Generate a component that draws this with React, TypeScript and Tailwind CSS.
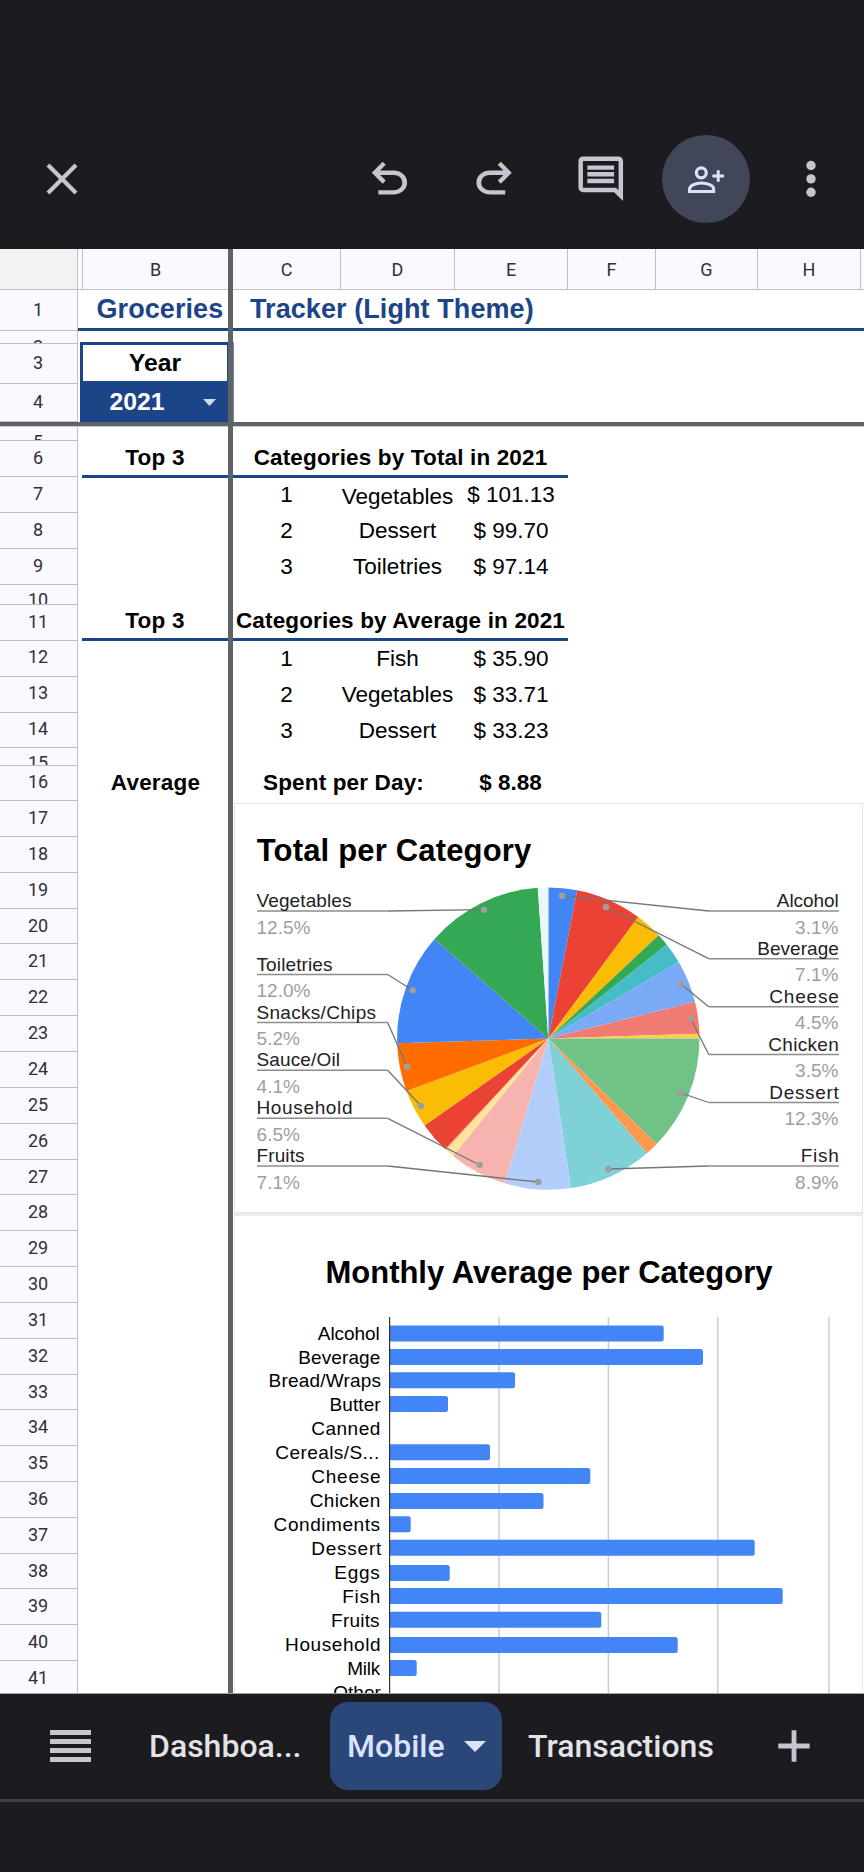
import type { ReactNode } from 'react'

type Row = { n: number; h: number; lh: number }

const frozenRows: Row[] = [
	{ n: 1, h: 41, lh: 40 },
	{ n: 2, h: 13, lh: 31 },
	{ n: 3, h: 40, lh: 37 },
	{ n: 4, h: 38, lh: 36 },
]

const rowHeights = [
	14, 36, 36, 36, 36, 20, 36, 36, 36, 35, 18, 35, 36, 36, 36, 35, 36, 36, 36,
	36, 36, 36, 35, 36, 36, 36, 36, 36, 35, 36, 36, 36, 36, 35, 36, 36, 36,
]

const scrollRows: Row[] = rowHeights.map((h, i) => ({
	n: i + 5,
	h,
	lh: h < 25 ? 30 : i + 5 >= 12 && i + 5 <= 16 ? 32 : 33,
}))

const columns = [
	{ name: 'C', w: 'w-[108px]' },
	{ name: 'D', w: 'w-[114px]' },
	{ name: 'E', w: 'w-[113px]' },
	{ name: 'F', w: 'w-[88px]' },
	{ name: 'G', w: 'w-[102px]' },
	{ name: 'H', w: 'w-[103px]' },
]

const slices = [
	{ end: 11, color: '#4285f4' },
	{ end: 36.5, color: '#ea4335' },
	{ end: 46.9, color: '#fbbc04' },
	{ end: 51.5, color: '#34a853' },
	{ end: 59.6, color: '#46bdc6' },
	{ end: 75.9, color: '#7baaf7' },
	{ end: 88.2, color: '#f07b72' },
	{ end: 90, color: '#fcd04f' },
	{ end: 134.2, color: '#71c287' },
	{ end: 139.3, color: '#ff994d' },
	{ end: 171.4, color: '#7ed1d7' },
	{ end: 196.8, color: '#b3cefb' },
	{ end: 219.1, color: '#f7b4ae' },
	{ end: 222.3, color: '#fde49b' },
	{ end: 223, color: '#ffc599' },
	{ end: 234.9, color: '#ea4335' },
	{ end: 249.7, color: '#fbbc04' },
	{ end: 268.2, color: '#ff6d01' },
	{ end: 311.2, color: '#4285f4' },
	{ end: 356, color: '#34a853' },
	{ end: 360, color: '#ebf8f9' },
]

// x/y are the dot inside the slice, line is the y of the label underline
const leftLabels = [
	{ text: 'Vegetables', pct: '12.5%', line: 911, x: 484, y: 909.7, w: 95 },
	{ text: 'Toiletries', pct: '12.0%', line: 974.5, x: 412.7, y: 990.3, w: 76 },
	{ text: 'Snacks/Chips', pct: '5.2%', line: 1022.5, x: 407, y: 1066.7, w: 119.5 },
	{ text: 'Sauce/Oil', pct: '4.1%', line: 1070.3, x: 421, y: 1106, w: 83.5 },
	{ text: 'Household', pct: '6.5%', line: 1118.3, x: 479.7, y: 1165, w: 96 },
	{ text: 'Fruits', pct: '7.1%', line: 1166, x: 538.3, y: 1182, w: 48 },
]

const rightLabels = [
	{ text: 'Alcohol', pct: '3.1%', line: 911, x: 562, y: 895.7, w: 62 },
	{ text: 'Beverage', pct: '7.1%', line: 958.7, x: 606, y: 907, w: 81.5 },
	{ text: 'Cheese', pct: '4.5%', line: 1006.7, x: 681, y: 984, w: 69.5 },
	{ text: 'Chicken', pct: '3.5%', line: 1054.5, x: 690.7, y: 1018.7, w: 70.5 },
	{ text: 'Dessert', pct: '12.3%', line: 1102.5, x: 681, y: 1093, w: 69.5 },
	{ text: 'Fish', pct: '8.9%', line: 1166, x: 608.3, y: 1169, w: 38 },
]

const bars = [
	{ text: 'Alcohol', x: 318, w: 62, top: 1325.5, end: 663.7 },
	{ text: 'Beverage', x: 298.5, w: 82, top: 1349, end: 703 },
	{ text: 'Bread/Wraps', x: 268.8, w: 112.5, top: 1372.3, end: 515 },
	{ text: 'Butter', x: 329.8, w: 51, top: 1396, end: 448 },
	{ text: 'Canned', x: 311.5, w: 69, top: 0, end: 0 },
	{ text: 'Cereals/S...', x: 275.5, w: 104, top: 1444.3, end: 490 },
	{ text: 'Cheese', x: 311.5, w: 69.3, top: 1468, end: 590.3 },
	{ text: 'Chicken', x: 310, w: 70.5, top: 1493, end: 543.5 },
	{ text: 'Condiments', x: 273.8, w: 106.5, top: 1516.3, end: 410.7 },
	{ text: 'Dessert', x: 311.5, w: 70, top: 1539.8, end: 754.7 },
	{ text: 'Eggs', x: 334.5, w: 45.5, top: 1565, end: 449.7 },
	{ text: 'Fish', x: 342.5, w: 38, top: 1588, end: 782.7 },
	{ text: 'Fruits', x: 331.3, w: 48.5, top: 1611.7, end: 601.3 },
	{ text: 'Household', x: 285.3, w: 95.5, top: 1637, end: 677.7 },
	{ text: 'Milk', x: 347.5, w: 33, top: 1660, end: 416.7 },
	{ text: 'Other', x: 333.5, w: 47.5, top: 0, end: 0 },
]

const CX = 548.3
const CY = 1038.6
const R = 151.2

function slicePath(from: number, to: number) {
	const point = (deg: number) => {
		const a = (deg * Math.PI) / 180
		return `${CX + R * Math.sin(a)} ${CY - R * Math.cos(a)}`
	}
	return `M${CX} ${CY}L${point(from)}A${R} ${R} 0 0 1 ${point(to)}Z`
}

function Icon({ d, className }: { d: string; className: string }) {
	return (
		<svg viewBox="0 -960 960 960" className={`shrink-0 ${className}`} fill="#c4c6d0">
			<path d={d} />
		</svg>
	)
}

function TopBar() {
	return (
		<header className="flex h-[249px] shrink-0 items-start pt-[135px]">
			<div className="flex h-[88px] w-full items-center">
				<svg viewBox="0 0 32 32" className="ml-[45.5px] size-8 shrink-0" stroke="#c4c6d0" strokeWidth="4.2">
					<path d="M2 2L30 30M30 2L2 30" />
				</svg>
				<Icon
					className="ml-[285.5px] mt-px size-[52.5px]"
					d="M280-200v-80h284q63 0 109.5-40T720-420q0-60-46.5-100T564-560H312l104 104-56 56-200-200 200-200 56 56-104 104h252q97 0 169.5 63T806-420q0 94-72.5 157T564-200H280Z"
				/>
				<Icon
					className="ml-[52.5px] mt-px size-[52.5px]"
					d="M396-200q-97 0-169.5-63T154-420q0-94 72.5-157T396-640h252L544-744l56-56 200 200-200 200-56-56 104-104H396q-63 0-109.5 40T240-420q0 60 46.5 100T396-280h284v80H396Z"
				/>
				<Icon
					className="ml-[53px] size-[53.5px]"
					d="M240-400h480v-80H240v80Zm0-120h480v-80H240v80Zm0-120h480v-80H240v80ZM880-80 720-240H160q-33 0-56.5-23.5T80-320v-480q0-33 23.5-56.5T160-880h640q33 0 56.5 23.5T880-800v720ZM160-320h594l46 45v-525H160v480Z"
				/>
				<div className="ml-[34.5px] flex size-[88px] shrink-0 items-center justify-center rounded-full bg-[#414659]">
					<svg viewBox="0 0 36 27" className="h-[27px] w-9" fill="none" stroke="#dae2ff">
						<circle cx="13.3" cy="6.8" r="5" strokeWidth="3.2" />
						<path d="M1.5 25.4V23.3C1.5 19.5 8 17 13.6 17S25.7 19.5 25.7 23.3V25.4Z" strokeWidth="3" />
						<path d="M24.4 10H36M30.2 4.3V15.8" strokeWidth="3" />
					</svg>
				</div>
				<svg viewBox="0 0 10 38" className="ml-[56.5px] h-[38px] w-2.5 shrink-0" fill="#c4c6d0">
					<circle cx="5" cy="5.5" r="4.7" />
					<circle cx="5" cy="18.9" r="4.7" />
					<circle cx="5" cy="32.3" r="4.7" />
				</svg>
			</div>
		</header>
	)
}

function RowNumbers({ rows }: { rows: Row[] }) {
	return (
		<>
			{rows.map((row) => (
				<div
					key={row.n}
					className="w-full shrink-0 overflow-hidden border-b border-r border-[#c0c0c3] bg-[#faf9ff] text-center font-[Roboto,sans-serif] text-[18px] text-[#303036]"
					style={{ height: row.h, lineHeight: `${row.lh}px` }}
				>
					<span className="mr-px">{row.n}</span>
				</div>
			))}
		</>
	)
}

function ColumnHeader({ className, children }: { className: string; children?: ReactNode }) {
	return (
		<div className={`flex h-full shrink-0 items-center justify-center bg-[#faf9ff] font-[Roboto,sans-serif] text-[18px] font-normal text-[#303036] ${className}`}>
			{children}
		</div>
	)
}

const FreezeBar = () => <div className="h-[5px] w-full shrink-0 border-b border-[#c9cacc] bg-[#5f6368]" />

function DataRow({ rank, name, amount, className, nameClass = '' }: { rank: string; name: string; amount: string; className: string; nameClass?: string }) {
	return (
		<div className={`flex w-[335px] shrink-0 items-center text-center ${className}`}>
			<span className="w-[107px]">{rank}</span>
			<span className={`w-[115px] ${nameClass}`}>{name}</span>
			<span className="w-[112px] whitespace-nowrap">{amount}</span>
		</div>
	)
}

function PieChart() {
	return (
		<svg viewBox="235 804 627 408" className="block h-[408px] w-[627px]" fontFamily="Liberation Sans, sans-serif" fontSize="19">
			<text x="256.8" y="860.5" fontSize="31" fontWeight="bold" textLength="274.5">Total per Category</text>
			{slices.map((s, i) => (
				<path key={s.end} d={slicePath(i ? slices[i - 1].end : 0, s.end)} fill={s.color} />
			))}
			{leftLabels.map((l) => (
				<g key={l.text}>
					<path d={`M257 ${l.line}H387.7`} stroke="#8c8c8c" strokeWidth="1.4" />
					<path d={`M387.7 ${l.line}L${l.x} ${l.y}`} stroke="#757575" strokeWidth="1.3" />
					<circle cx={l.x} cy={l.y} r="3.2" fill="#9e9e9e" />
					<text x="256.5" y={l.line - 4} fill="#222" textLength={l.w}>{l.text}</text>
					<text x="256.5" y={l.line + 22.6} fill="#9e9e9e" textLength={l.pct.length === 5 ? 54 : 43.5}>{l.pct}</text>
				</g>
			))}
			{rightLabels.map((l) => (
				<g key={l.text}>
					<path d={`M708.7 ${l.line}H839`} stroke="#8c8c8c" strokeWidth="1.4" />
					<path d={`M708.7 ${l.line}L${l.x} ${l.y}`} stroke="#757575" strokeWidth="1.3" />
					<circle cx={l.x} cy={l.y} r="3.2" fill="#9e9e9e" />
					<text x={838.8 - l.w} y={l.line - 4} fill="#222" textLength={l.w}>{l.text}</text>
					<text x={l.pct.length === 5 ? 784.5 : 795} y={l.line + 22.6} fill="#9e9e9e" textLength={l.pct.length === 5 ? 54 : 43.5}>{l.pct}</text>
				</g>
			))}
		</svg>
	)
}

function BarChart() {
	return (
		<svg viewBox="235 1216 627 477" className="block h-[477px] w-[627px]" fontFamily="Liberation Sans, sans-serif" fontSize="19">
			<text x="325.5" y="1282.5" fontSize="31" fontWeight="bold" textLength="447">Monthly Average per Category</text>
			{[499, 608.4, 717.8, 829].map((x) => (
				<path key={x} d={`M${x} 1317V1693`} stroke="#ccc" strokeWidth="1.5" />
			))}
			{bars.map((b, i) => (
				<g key={b.text}>
					<text x={b.x - 0.2} y={1339.6 + i * 23.93} textLength={b.w}>{b.text}</text>
					{b.end > 0 && (
						<path d={`M390 ${b.top}H${b.end - 2.5}q2.5 0 2.5 2.5v11q0 2.5-2.5 2.5H390Z`} fill="#4285f4" />
					)}
				</g>
			))}
			<path d="M389.6 1317V1693" stroke="#333" strokeWidth="1.2" />
		</svg>
	)
}

function Sheet() {
	return (
		<main className="flex h-[1445px] shrink-0 overflow-hidden border-b border-[#a0a0a3] bg-white font-['Liberation_Sans',sans-serif] text-[22.5px] text-black">
			<div className="flex w-[78px] shrink-0 flex-col">
				<div className="h-[41px] shrink-0 border-b border-r border-[#c0c0c3] bg-[#f2f2f2]" />
				<RowNumbers rows={frozenRows} />
				<FreezeBar />
				<RowNumbers rows={scrollRows} />
			</div>

			<div className="flex w-[150px] shrink-0 flex-col font-bold">
				<div className="flex h-[41px] shrink-0 border-b border-[#c0c0c3]">
					<ColumnHeader className="w-[5px] border-r border-[#c0c0c3]" />
					<ColumnHeader className="w-[145px]">B</ColumnHeader>
				</div>
				<div className="h-[41px] shrink-0 border-b-3 border-[#1c4587] pl-[18.5px] text-[27px] leading-[39px] tracking-[0.08px] text-[#1c4587]">Groceries</div>
				<div className="ml-0.5 mt-[11px] flex h-20 shrink-0 flex-col border-l-3 border-t-3 border-[#1c4587] text-[24.75px]">
					<div className="flex h-9 items-center justify-center border-r border-[#1c4587] bg-white">Year</div>
					<div className="flex flex-1 items-center bg-[#1c4587] pl-[26px] pt-px text-white">
						<span className="w-[56px] text-center">2021</span>
						<svg viewBox="0 0 13 7" className="ml-[38px] h-[7px] w-[13px]" fill="#d2dae7">
							<path d="M0 0H13L6.5 7Z" />
						</svg>
					</div>
				</div>
				<FreezeBar />
				<div className="ml-1 mt-[14px] flex h-[37px] shrink-0 items-center justify-center border-b-3 border-[#1c4587] tracking-[0.2px]">Top 3</div>
				<div className="ml-1 mt-[126px] flex h-[37px] shrink-0 items-center justify-center border-b-3 border-[#1c4587] tracking-[0.2px]">Top 3</div>
				<div className="ml-[5px] mt-[124px] flex h-9 shrink-0 items-center justify-center tracking-[0.2px]">Average</div>
			</div>

			<div className="w-[5px] shrink-0 bg-[#5f6368]" />

			<div className="flex w-[631px] shrink-0 flex-col">
				<div className="flex h-[41px] shrink-0 border-b border-[#c0c0c3]">
					{columns.map((c) => (
						<ColumnHeader key={c.name} className={`border-r border-[#c0c0c3] ${c.w}`}>{c.name}</ColumnHeader>
					))}
					<ColumnHeader className="w-[3px]" />
				</div>
				<div className="h-[41px] shrink-0 border-b-3 border-[#1c4587] pl-[17px] text-[27px] font-bold leading-[39px] tracking-[0.08px] text-[#1c4587]">
					Tracker (Light Theme)
				</div>
				<div className="mt-[11px] h-20 shrink-0 border-l border-[#6f8ab5]" />
				<FreezeBar />
				<div className="mt-[14px] flex h-[37px] w-[335px] shrink-0 items-center justify-center whitespace-nowrap border-b-3 border-[#1c4587] font-bold tracking-[0.15px]">
					Categories by Total in 2021
				</div>
				<DataRow rank="1" name="Vegetables" amount="$ 101.13" className="h-[34px]" nameClass="pt-[3px]" />
				<DataRow rank="2" name="Dessert" amount="$ 99.70" className="h-[37px]" />
				<DataRow rank="3" name="Toiletries" amount="$ 97.14" className="h-9" />
				<div className="mt-[19px] flex h-[37px] w-[335px] shrink-0 items-center justify-center whitespace-nowrap border-b-3 border-[#1c4587] font-bold tracking-[0.15px]">
					Categories by Average in 2021
				</div>
				<DataRow rank="1" name="Fish" amount="$ 35.90" className="h-9" />
				<DataRow rank="2" name="Vegetables" amount="$ 33.71" className="h-9" />
				<DataRow rank="3" name="Dessert" amount="$ 33.23" className="h-[35px]" />
				<div className="mt-[17px] flex h-9 shrink-0 items-center text-center font-bold">
					<span className="w-[221px] tracking-[0.15px]">Spent per Day:</span>
					<span className="w-[113px]">$ 8.88</span>
				</div>
				<div className="ml-px mt-0.5 w-[629px] shrink-0 border border-[#e4e4e4]">
					<PieChart />
				</div>
				<div className="ml-px w-[629px] shrink-0 border-x border-t-3 border-[#ebebeb]">
					<BarChart />
				</div>
			</div>
		</main>
	)
}

function TabBar() {
	return (
		<nav className="flex h-[108px] shrink-0 items-start border-b-3 border-[#3f4044] pt-2 font-['Google_Sans',Roboto,sans-serif] text-[32px] font-medium text-[#e3e2e6]">
			<div className="flex h-[88px] w-full items-center">
				<div className="ml-[50px] flex w-[41px] shrink-0 flex-col gap-1">
					<div className="h-[4.8px] bg-[#c4c6d0]" />
					<div className="h-[4.8px] bg-[#c4c6d0]" />
					<div className="h-[4.8px] bg-[#c4c6d0]" />
					<div className="h-[4.8px] bg-[#c4c6d0]" />
				</div>
				<span className="ml-[58px] w-[181px]">Dashboa...</span>
				<div className="flex h-[88px] w-[172px] shrink-0 items-center rounded-[18px] bg-[#2b4678] pl-[17px] text-[#d9e2ff]">
					<span className="w-[117px]">Mobile</span>
					<svg viewBox="0 0 22 11" className="h-[11px] w-[22px]" fill="#d9e2ff">
						<path d="M0 0H22L11 11Z" />
					</svg>
				</div>
				<span className="ml-[26px] w-[188px]">Transactions</span>
				<svg viewBox="0 0 32 32" className="ml-[61.5px] size-8 shrink-0" stroke="#c4c6d0" strokeWidth="4.8">
					<path d="M16 0.3V31.7M0.3 16H31.7" />
				</svg>
			</div>
		</nav>
	)
}

const App = () => {
	return (
		<div className="flex h-[1872px] w-[864px] flex-col overflow-hidden bg-[#1b1b20]">
			<TopBar />
			<Sheet />
			<TabBar />
		</div>
	)
}

export default App
